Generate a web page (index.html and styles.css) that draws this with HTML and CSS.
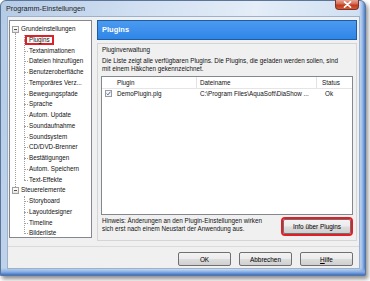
FILE: index.html
```html
<!DOCTYPE html>
<html lang="de">
<head>
    <meta charset="UTF-8">
    <meta name="viewport" content="width=device-width, initial-scale=1.0">
    <title>Programm-Einstellungen</title>
    <link rel="stylesheet" href="styles.css">
</head>
<body>
    <div class="window">
        <div class="titlebar">
            <span class="title">Programm-Einstellungen</span>
            <span class="close">
                <svg width="9" height="7" viewBox="0 0 9 7">
                    <path d="M1.5 0.8 L7.5 6.2 M7.5 0.8 L1.5 6.2" stroke="#fff" stroke-width="1.6" stroke-linecap="round"/>
                </svg>
            </span>
        </div>

        <div class="client">
            <div class="main">
                <!-- Baum links -->
                <ul class="tree">
                    <li class="root first"><span class="exp"></span>Grundeinstellungen
                        <ul class="children">
                            <li><span class="mark">Plugins</span></li>
                            <li>Textanimationen</li>
                            <li>Dateien hinzufügen</li>
                            <li>Benutzeroberfläche</li>
                            <li>Temporäres Verz...</li>
                            <li>Bewegungspfade</li>
                            <li>Sprache</li>
                            <li>Autom. Update</li>
                            <li>Soundaufnahme</li>
                            <li>Soundsystem</li>
                            <li>CD/DVD-Brenner</li>
                            <li>Bestätigungen</li>
                            <li>Autom. Speichern</li>
                            <li>Text-Effekte</li>
                        </ul>
                    </li>
                    <li class="root"><span class="exp"></span>Steuerelemente
                        <ul class="children">
                            <li>Storyboard</li>
                            <li>Layoutdesigner</li>
                            <li>Timeline</li>
                            <li>Bilderliste</li>
                        </ul>
                    </li>
                </ul>

                <!-- Seite rechts -->
                <div class="panel">
                    <div class="panel-head">Plugins</div>
                    <div class="group">
                        <div class="group-title">Pluginverwaltung</div>
                        <p class="desc">Die Liste zeigt alle verfügbaren Plugins. Die Plugins, die geladen werden sollen, sind<br>mit einem Häkchen gekennzeichnet.</p>
                        <div class="list">
                            <div class="list-head">
                                <span class="col c1">Plugin</span>
                                <span class="col c2">Dateiname</span>
                                <span class="col c3">Status</span>
                            </div>
                            <div class="list-row">
                                <span class="col c1">
                                    <svg class="check" width="7" height="7" viewBox="0 0 7 7">
                                        <rect x="0.5" y="0.5" width="6" height="6" fill="#f1f4f8" stroke="#9a9b9c"/>
                                        <path d="M1.6 3.5 L2.9 4.9 L5.4 1.8" fill="none" stroke="#5a6d9f" stroke-width="1"/>
                                    </svg>DemoPlugin.plg
                                </span>
                                <span class="col c2">C:\Program Files\AquaSoft\DiaShow ...</span>
                                <span class="col c3">Ok</span>
                            </div>
                        </div>
                        <div class="note-row">
                            <p class="note">Hinweis: Änderungen an den Plugin-Einstellungen wirken<br>sich erst nach einem Neustart der Anwendung aus.</p>
                            <button class="btn info">Info über Plugins</button>
                        </div>
                    </div>
                </div>
            </div>

            <div class="footer">
                <button class="btn">OK</button>
                <button class="btn">Abbrechen</button>
                <button class="btn"><u>H</u>ilfe</button>
            </div>
        </div>
    </div>
</body>
</html>
```

FILE: styles.css
```css
body, ul, p {
    margin: 0;
    padding: 0;
}

body {
    width: 370px;
    height: 281px;
    overflow: hidden;
    background: #ffffff;
    font-family: "Liberation Sans", Arial, sans-serif;
    font-size: 6.3px;
    color: #111;
}

/* Fensterrahmen */
.window {
    width: 366px;
    height: 276px;
    box-sizing: border-box;
    border: 1px solid #5a7598;
    border-radius: 6px 6px 0 0;
    display: flex;
    flex-direction: column;
    background:
        linear-gradient(to top, #3a72d0 0, #86ade3 3px, rgba(200, 219, 241, 0) 7px),
        linear-gradient(to left, #4b80d3 0, #a2c0e9 3px, rgba(200, 219, 241, 0) 6px),
        linear-gradient(100deg, #b4cbe6 0%, #d2e0f2 35%, #e4edf8 62%, #c6d9ef 100%);
    box-shadow: 2px 3px 4px rgba(0, 0, 0, 0.45);
}

.titlebar {
    height: 15px;
    position: relative;
    display: flex;
    align-items: center;
    padding-left: 5px;
}
.title {
    font-size: 7.2px;
    color: #1e1e1e;
}
.close {
    position: absolute;
    top: -1px;
    right: 6px;
    width: 24px;
    height: 10px;
    box-sizing: border-box;
    border: 1px solid #7b3326;
    border-top: none;
    border-radius: 0 0 4px 4px;
    background: linear-gradient(#e8a493 0, #d26a52 45%, #c2381c 55%, #d35a37 100%);
    display: flex;
    align-items: center;
    justify-content: center;
}

.client {
    flex: 1;
    margin: 0 5px 6px 6px;
    border: 1px solid #9cb1cb;
    background: #f0f0f0;
    display: flex;
    flex-direction: column;
}

.main {
    display: flex;
    padding: 3px 2px 0 1px;
}

/* Baum */
.tree {
    list-style: none;
    width: 83px;
    height: 218px;
    box-sizing: border-box;
    border: 1px solid #828790;
    background: #fff;
    padding-top: 3px;
}
.tree li {
    list-style: none;
    line-height: 10.75px;
    white-space: nowrap;
}
.root {
    position: relative;
    padding-left: 11px;
}
.exp {
    position: absolute;
    left: 2px;
    top: 2px;
    width: 5px;
    height: 5px;
    border: 1px solid #a0a0a0;
    background: linear-gradient(#fff, #e4e4e4);
}
.exp::after {
    content: "";
    position: absolute;
    left: 1px;
    top: 2px;
    width: 3px;
    height: 1px;
    background: #505050;
}
.root.first::before {
    content: "";
    position: absolute;
    left: 5px;
    top: 9px;
    bottom: -2px;
    border-left: 1px dotted #a0a0a0;
}
.children {
    position: relative;
    padding-left: 8px;
}
.children::before {
    content: "";
    position: absolute;
    left: 3px;
    top: 0;
    bottom: 5px;
    border-left: 1px dotted #a0a0a0;
}
.children li {
    position: relative;
}
.children li::before {
    content: "";
    position: absolute;
    left: -5px;
    top: 5px;
    width: 4px;
    border-top: 1px dotted #a0a0a0;
}
.mark {
    display: inline-block;
    margin-left: -4px;
    padding: 0 2px;
    border: 2px solid #e01f26;
    height: 6px;
    line-height: 6px;
    vertical-align: top;
    margin-top: 0.5px;
    position: relative;
    z-index: 1;
    background: #fff;
}

/* rechte Seite */
.panel {
    flex: 1;
    margin-left: 5px;
    display: flex;
    flex-direction: column;
}
.panel-head {
    height: 20px;
    box-sizing: border-box;
    border: 1px solid #1e5ca4;
    background: linear-gradient(#4b9af0, #2f86e8);
    color: #fff;
    font-weight: bold;
    font-size: 7.5px;
    line-height: 18px;
    padding-left: 4px;
}
.group {
    margin-top: 3px;
    height: 198px;
    box-sizing: border-box;
    border: 1px solid #d5d5d5;
    padding: 2px 3px 0 3px;
    display: flex;
    flex-direction: column;
}
.group-title {
    line-height: 8px;
    padding-left: 1px;
}
.desc {
    margin-top: 2.5px;
    line-height: 8px;
    padding-left: 1px;
}

.list {
    margin-top: 3.5px;
    height: 139px;
    box-sizing: border-box;
    border: 1px solid #828790;
    background: #fff;
}
.list-head, .list-row {
    display: flex;
}
.list-head {
    height: 11px;
    line-height: 11px;
    border-bottom: 1px solid #e5e5e5;
}
.list-row {
    height: 9px;
    line-height: 9px;
}
.col {
    box-sizing: border-box;
    white-space: nowrap;
    display: flex;
    align-items: center;
}
.c1 {
    width: 95px;
    padding-left: 3px;
}
.c2 {
    width: 120px;
    padding-left: 3px;
}
.c3 {
    flex: 1;
    padding-left: 5px;
}
.list-head .c1 {
    padding-left: 15px;
    border-right: 1px solid #e3e3e3;
}
.list-head .c2 {
    border-right: 1px solid #e3e3e3;
}
.list-row .c3 {
    padding-left: 8px;
}
.check {
    margin-right: 5px;
}

.note-row {
    display: flex;
    justify-content: space-between;
    margin-top: 2px;
}
.note {
    line-height: 8px;
    padding-left: 1px;
}

/* Knoepfe */
.btn {
    font-family: "Liberation Sans", Arial, sans-serif;
    font-size: 6.4px;
    color: #000;
    width: 53px;
    height: 14px;
    padding: 0;
    box-sizing: border-box;
    border: 1px solid #707070;
    border-radius: 2px;
    background: linear-gradient(#f3f3f3 0, #ebebeb 48%, #dddddd 52%, #cfcfcf 100%);
}
.info {
    width: 68px;
    height: 15px;
    margin: 2px 2px 0 0;
    outline: 2px solid #e01f26;
}

.footer {
    margin-top: 5px;
    border-top: 1px solid #dadada;
    padding: 5px 6px 2px 0;
    display: flex;
    justify-content: flex-end;
    gap: 8px;
}
```
